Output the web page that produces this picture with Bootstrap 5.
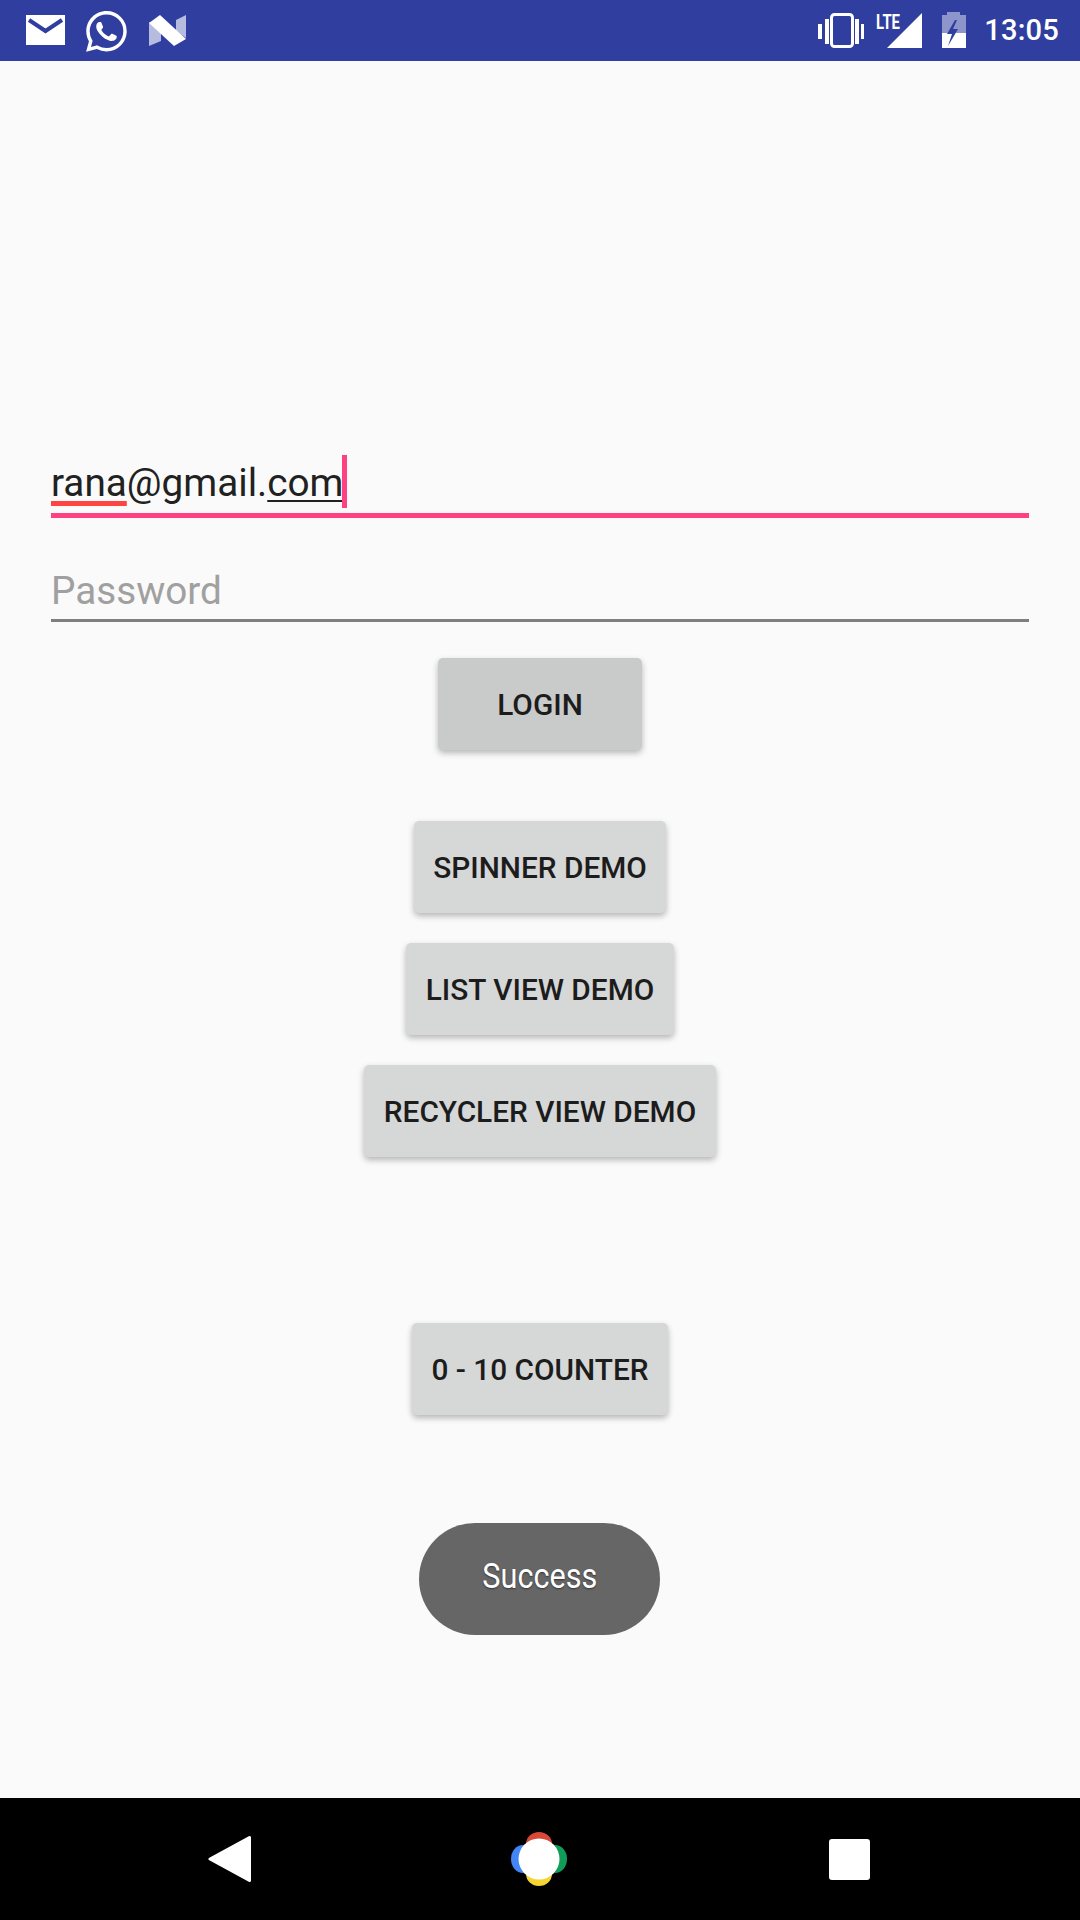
<!DOCTYPE html>
<html lang="en">
<head>
    <meta charset="UTF-8">
    <meta name="viewport" content="width=device-width, initial-scale=1.0">
    <title>Login</title>
    <link href="https://cdn.jsdelivr.net/npm/bootstrap@5.3.0/dist/css/bootstrap.min.css" rel="stylesheet">
    <style>
        body {
            font-family: Roboto, "Liberation Sans", sans-serif;
            background: #fafafa;
            margin: 0;
        }
        .phone-screen { width: 1080px; height: 1920px; }
        .status-strip { height: 61px; background: #303f9f; color: #fff; padding: 0 21px 0 26px; }
        .status-time { font-size: 29.1px; font-weight: 500; line-height: 1; margin-left: 18px; letter-spacing: .2px; }

        .app-body { padding: 394px 51px 0; }
        .text-line { height: 63px; font-size: 38.7px; line-height: 1; color: #212121; position: relative; }
        .line-focus { border-bottom: 5px solid #ff4081; padding-top: 9px; }
        .line-idle { height: 62px; margin-top: 42px; border-bottom: 3px solid #7f7f7f; color: #a0a0a0; padding-top: 12px; }
        .word-wrong { text-decoration: underline 5px #ff4444; text-underline-offset: 5px; text-decoration-skip-ink: none; }
        .word-compose { text-decoration: underline 2px #212121; text-underline-offset: 4px; text-decoration-skip-ink: none; }
        .text-caret { position: absolute; left: 291px; top: 0; width: 5px; height: 53px; background: #ff4081; }

        .gray-btn {
            height: 92px;
            background: #d6d7d7;
            color: #1c1c1c;
            border: 0;
            border-radius: 5px;
            font-size: 29.8px;
            font-weight: 500;
            padding: 3px 19.5px 0;
            box-shadow: 0 3px 6px rgba(0, 0, 0, .28);
        }
        .btn-login { width: 204px; margin-top: 36px; background: #c9caca; }
        .btn-spinner { margin-top: 71px; }
        .btn-list { margin-top: 30px; }
        .btn-recycler { margin-top: 30px; }
        .btn-counter { margin-top: 166px; }

        .toast-pill {
            width: 241px;
            height: 112px;
            margin-top: 108px;
            margin-right: 2px;
            padding: 0 0 4px 2px;
            background: #666;
            color: #fff;
            border-radius: 56px;
            font-size: 35.6px;
            text-shadow: 0 1px 2px rgba(0, 0, 0, .5);
        }
        .toast-text { transform: scaleX(.86); }

        .nav-strip { height: 122px; background: #000; margin-top: auto; padding: 0 210px 0 208px; }
        .home-icon { margin-right: 4px; }
    </style>
</head>
<body>
    <div class="phone-screen d-flex flex-column">
        <!-- status bar -->
        <div class="status-strip d-flex align-items-center justify-content-between">
            <svg width="160" height="61" viewBox="26 0 160 61">
                <path fill="#fff" d="M26 15h39v30H26z"/>
                <path fill="none" stroke="#303f9f" stroke-width="4" d="M29 20l16.500 11L62 20"/>
                <g transform="translate(86 11) scale(1.7)">
                    <path fill="#fff" d="M17.472 14.382c-.297-.149-1.758-.867-2.03-.967-.273-.099-.471-.148-.67.15-.197.297-.767.966-.94 1.164-.173.199-.347.223-.644.075-.297-.15-1.255-.463-2.39-1.475-.883-.788-1.48-1.761-1.653-2.059-.173-.297-.018-.458.13-.606.134-.133.298-.347.446-.52.149-.174.198-.298.298-.497.099-.198.05-.371-.025-.52-.075-.149-.669-1.612-.916-2.207-.242-.579-.487-.5-.669-.51-.173-.008-.371-.01-.57-.01-.198 0-.52.074-.792.372-.272.297-1.04 1.016-1.04 2.479 0 1.462 1.065 2.875 1.213 3.074.149.198 2.096 3.2 5.077 4.487.709.306 1.262.489 1.694.625.712.227 1.36.195 1.871.118.571-.085 1.758-.719 2.006-1.413.248-.694.248-1.289.173-1.413-.074-.124-.272-.198-.57-.347m-5.421 7.403h-.004a9.87 9.87 0 01-5.031-1.378l-.361-.214-3.741.982.998-3.648-.235-.374a9.86 9.86 0 01-1.51-5.26c.001-5.45 4.436-9.884 9.888-9.884 2.64 0 5.122 1.03 6.988 2.898a9.825 9.825 0 012.893 6.994c-.003 5.45-4.437 9.884-9.885 9.884m8.413-18.297A11.815 11.815 0 0012.05 0C5.495 0 .16 5.335.157 11.892c0 2.096.547 4.142 1.588 5.945L.057 24l6.305-1.654a11.882 11.882 0 005.683 1.448h.005c6.554 0 11.89-5.335 11.893-11.893a11.821 11.821 0 00-3.48-8.413Z"/>
                </g>
                <path fill="#fff" fill-opacity=".65" d="M149 22l12 9v10l-12 5zM176 20l10-5v23l-10-7z"/>
                <path fill="#fff" d="M149 23l11-8 26 24-12 7z"/>
            </svg>
            <div class="d-flex align-items-center">
                <svg width="148" height="61" viewBox="818 0 148 61">
                    <path fill="#fff" d="M818 24h4v15h-4zM825 19h4v25h-4zM855 19h4v25h-4zM861 24h3v15h-3z"/>
                    <rect x="831.500" y="14.500" width="21" height="32" rx="3" fill="none" stroke="#fff" stroke-width="3"/>
                    <path fill="#fff" d="M887 48l35-35v35z"/>
                    <text x="876" y="28.500" fill="#fff" font-family="Roboto, sans-serif" font-weight="700" font-size="20" textLength="24" lengthAdjust="spacingAndGlyphs">LTE</text>
                    <path fill="#fff" fill-opacity=".45" d="M947 15v-3h13v3h6v18h-24V15z"/>
                    <path fill="#fff" d="M942 33h24v15h-24z"/>
                    <path fill="#303f9f" d="M955 20l-8 14h5l-4 12 10-17h-5l4-9z"/>
                </svg>
                <span class="status-time">13:05</span>
            </div>
        </div>

        <!-- form and buttons -->
        <div class="app-body d-flex flex-column align-items-center">
            <div class="text-line line-focus w-100"><span class="word-wrong">rana</span>@gmail.<span class="word-compose">com</span><span class="text-caret"></span></div>
            <div class="text-line line-idle w-100">Password</div>
            <button class="btn gray-btn btn-login">LOGIN</button>
            <button class="btn gray-btn btn-spinner">SPINNER DEMO</button>
            <button class="btn gray-btn btn-list">LIST VIEW DEMO</button>
            <button class="btn gray-btn btn-recycler">RECYCLER VIEW DEMO</button>
            <button class="btn gray-btn btn-counter">0 - 10 COUNTER</button>
            <div class="toast-pill d-flex align-items-center justify-content-center"><span class="toast-text">Success</span></div>
        </div>

        <!-- nav bar -->
        <div class="nav-strip d-flex align-items-center justify-content-between">
            <svg width="44" height="50" viewBox="0 0 44 50">
                <path fill="#fff" stroke="#fff" stroke-width="3" stroke-linejoin="round" d="M41.500 3.500v43L2 25z"/>
            </svg>
            <svg class="home-icon" width="56" height="54" viewBox="0 0 56 54">
                <ellipse cx="28" cy="12" rx="13" ry="12" fill="#d84a38"/>
                <ellipse cx="28" cy="42" rx="13" ry="12" fill="#f5d531"/>
                <ellipse cx="12" cy="27" rx="12" ry="14" fill="#4285f4"/>
                <ellipse cx="44" cy="27" rx="12" ry="14" fill="#0f9d58"/>
                <circle cx="28" cy="27" r="20.500" fill="#fff"/>
            </svg>
            <svg width="41" height="41" viewBox="0 0 41 41">
                <rect width="41" height="41" rx="3" fill="#fff"/>
            </svg>
        </div>
    </div>
    <script src="https://cdn.jsdelivr.net/npm/bootstrap@5.3.0/dist/js/bootstrap.bundle.min.js"></script>
</body>
</html>
